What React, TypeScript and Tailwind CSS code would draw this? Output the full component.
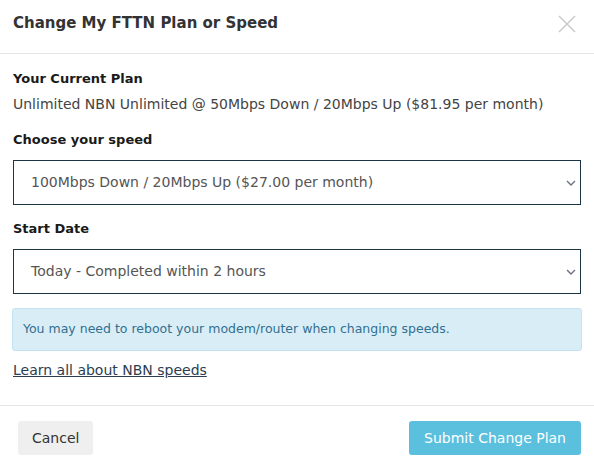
import React from 'react';

const Chevron = () => (
  <svg width="10" height="6" viewBox="0 0 10 6" className="absolute right-[4px] top-1/2 -translate-y-1/2 text-gray-500">
    <path d="M1 1l4 4 4-4" fill="none" stroke="currentColor" strokeWidth="1.4" />
  </svg>
);

const SelectBox = ({ value }: { value: string }) => (
  <div className="relative flex items-center h-[45px] border border-[#1c3544] pl-[17px] text-[#555] text-[14px]">
    <span>{value}</span>
    <Chevron />
  </div>
);

const App = () => {
  return (
    <div className="w-[594px] h-[465px] bg-white text-[#222] font-['DejaVu_Sans',sans-serif]">
      <div className="flex items-center justify-between h-[54px] pb-[8px] px-[13px] border-b border-[#e5e5e5]">
        <h2 className="text-[15px] leading-[20px] font-bold text-[#333]">Change My FTTN Plan or Speed</h2>
        <svg width="18" height="18" viewBox="0 0 18 18" className="mr-[5px] mt-[3px] text-[#c8c8c8]">
          <path d="M1 1l16 16M17 1L1 17" stroke="currentColor" strokeWidth="1.4" />
        </svg>
      </div>

      <div className="px-[13px] pt-[16px]">
        <h3 className="text-[13px] leading-[18px] font-bold text-[#1a1a1a]">Your Current Plan</h3>
        <p className="mt-[7px] text-[14px] leading-[18px] text-[#444]">Unlimited NBN Unlimited @ 50Mbps Down / 20Mbps Up ($81.95 per month)</p>

        <h3 className="mt-[18px] text-[13px] leading-[18px] font-bold text-[#1a1a1a]">Choose your speed</h3>
        <div className="mt-[11px]">
          <SelectBox value="100Mbps Down / 20Mbps Up ($27.00 per month)" />
        </div>

        <h3 className="mt-[15px] text-[13px] leading-[18px] font-bold text-[#1a1a1a]">Start Date</h3>
        <div className="mt-[11px]">
          <SelectBox value="Today - Completed within 2 hours" />
        </div>

        <div className="mt-[14px] -mx-px h-[43px] flex items-center px-[10px] bg-[#d9edf7] border border-[#c4e3f0] rounded-[3px] text-[12.5px] text-[#31708f]">
          You may need to reboot your modem/router when changing speeds.
        </div>

        <a href="#" className="block mt-[10px] text-[14px] leading-[18px] text-[#2c3e50] underline">Learn all about NBN speeds</a>
      </div>

      <div className="mt-[26px] border-t border-[#e5e5e5] flex items-center justify-between pl-[18px] pr-[13px] pt-[15px]">
        <button className="h-[34px] px-[14px] rounded-[3px] bg-[#efefef] text-[14px] text-[#333]">Cancel</button>
        <button className="h-[34px] px-[15px] rounded-[3px] bg-[#5bc0de] text-[14px] text-white">Submit Change Plan</button>
      </div>
    </div>
  );
};

export default App;
